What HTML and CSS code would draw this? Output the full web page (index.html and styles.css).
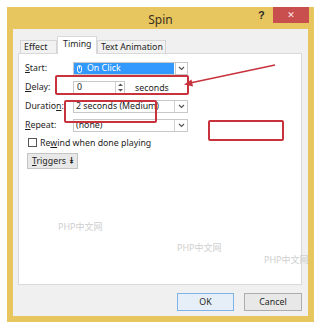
FILE: index.html
```html
<!DOCTYPE html>
<html>
<head>
<meta charset="utf-8">
<link rel="stylesheet" href="styles.css">
</head>
<body>
<div class="window">
  <div class="titlebar">
    <span class="title">Spin</span>
    <span class="help">?</span>
    <span class="close">✕</span>
  </div>
  <div class="body">
    <div class="tabs">
      <span class="tab t1">Effect</span>
      <span class="tab active">Timing</span>
      <span class="tab t3">Text Animation</span>
    </div>
    <div class="panel">
      <div class="form">
        <span class="label"><u>S</u>tart:</span>
        <div class="combo selected">
          <span class="field"><svg class="mouse" width="5" height="8" viewBox="0 0 5 8"><rect x="0.5" y="0.5" width="4" height="7" rx="2" fill="none" stroke="#fff"/><line x1="2.5" y1="1" x2="2.5" y2="3.5" stroke="#fff"/></svg><span>On Click</span></span>
          <span class="drop"><svg width="7" height="5" viewBox="0 0 7 5"><path d="M1 1 L3.5 3.5 L6 1" fill="none" stroke="#555" stroke-width="1.2"/></svg></span>
        </div>
        <span class="label"><u>D</u>elay:</span>
        <div class="delay-row">
          <div class="spin">
            <span class="value">0</span>
            <span class="arrows"><svg width="7" height="11" viewBox="0 0 7 11"><path d="M1 4 L3.5 1.5 L6 4 Z M1 7 L3.5 9.5 L6 7 Z" fill="#555"/></svg></span>
          </div>
          <span class="unit">seconds</span>
        </div>
        <span class="label">Duratio<u>n</u>:</span>
        <div class="combo">
          <span class="field"><span>2 seconds (Medium)</span></span>
          <span class="drop"><svg width="7" height="5" viewBox="0 0 7 5"><path d="M1 1 L3.5 3.5 L6 1" fill="none" stroke="#555" stroke-width="1.2"/></svg></span>
        </div>
        <span class="label"><u>R</u>epeat:</span>
        <div class="combo">
          <span class="field"><span>(none)</span></span>
          <span class="drop"><svg width="7" height="5" viewBox="0 0 7 5"><path d="M1 1 L3.5 3.5 L6 1" fill="none" stroke="#555" stroke-width="1.2"/></svg></span>
        </div>
      </div>
      <div class="check"><span class="box"></span><span class="ctext">Re<u>w</u>ind when done playing</span></div>
      <div class="triggers"><span class="ttext"><u>T</u>riggers</span><span class="dd">&#x2BEF;</span></div>
    </div>
    <div class="footer">
      <span class="btn ok">OK</span>
      <span class="btn">Cancel</span>
    </div>
  </div>
</div>

<span class="wm wm1">PHP中文网</span>
<span class="wm wm2">PHP中文网</span>
<span class="wm wm3">PHP中文网</span>

<div class="mark mark-delay"></div>
<div class="mark mark-duration"></div>
<div class="mark mark-empty"></div>
<svg class="arrow" width="321" height="330" viewBox="0 0 321 330">
  <line x1="275" y1="65" x2="190" y2="83" stroke="#c8323c" stroke-width="1.6"/>
  <path d="M184 84.5 L191.5 79.5 L193 86.5 Z" fill="#c8323c"/>
</svg>
</body>
</html>
```
FILE: styles.css
```css
* { box-sizing: border-box; }
html, body { margin: 0; padding: 0; background: #fff; }
body {
  width: 321px;
  height: 330px;
  position: relative;
  overflow: hidden;
  font-family: "Noto Sans", "Noto Sans CJK SC", sans-serif;
  font-size: 8.8px;
  color: #1e1e1e;
}
u { text-decoration: underline; text-underline-offset: 1px; }

.window {
  margin: 7px 0 0 7px;
  width: 307px;
  height: 315px;
  background: #e7c65f;
  display: flex;
  flex-direction: column;
}
.titlebar {
  height: 22px;
  position: relative;
}
.title {
  position: absolute;
  left: 0; right: 0;
  top: 4px;
  text-align: center;
  font-size: 12px;
  color: #3a3020;
}
.help {
  position: absolute;
  left: 251px;
  top: 2px;
  font-size: 11px;
  font-weight: bold;
  color: #2a2a2a;
  font-family: "Liberation Sans", sans-serif;
}
.close {
  position: absolute;
  left: 266px;
  top: 0;
  width: 36px;
  height: 16px;
  background: #c94f4f;
  color: #fbe8e8;
  font-size: 9px;
  font-weight: bold;
  display: flex;
  align-items: center;
  justify-content: center;
  font-family: "DejaVu Sans", sans-serif;
}
.body {
  margin: 0 6px 6px 6px;
  flex: 1;
  background: #f0f0f0;
  display: flex;
  flex-direction: column;
  padding: 7px 6px 0 5px;
}
.tabs {
  display: flex;
  align-items: flex-end;
  padding-left: 2px;
  height: 17px;
  position: relative;
  z-index: 1;
}
.tab {
  height: 13px;
  border: 1px solid #d6d6d6;
  border-bottom: none;
  background: #f2f2f2;
  padding: 0 3px;
  line-height: 12px;
  white-space: nowrap;
}
.tab.t1 { width: 37px; }
.tab.active {
  height: 18px;
  background: #fff;
  margin-bottom: -1px;
  line-height: 14px;
  padding: 0 5px;
  width: 40px;
  border-color: #d9d9d9;
}
.tab.t3 { width: 69px; }

.panel {
  height: 232px;
  background: #fff;
  border: 1px solid #d9d9d9;
  padding: 8px 0 0 6px;
  display: flex;
  flex-direction: column;
  align-items: flex-start;
}
.form {
  display: grid;
  grid-template-columns: 48px 115px;
  grid-auto-rows: 13px;
  row-gap: 6px;
  align-items: center;
}
.label { line-height: 13px; white-space: nowrap; }
.combo {
  display: flex;
  height: 13px;
  border: 1px solid #c8c8c8;
  background: #fff;
}
.field {
  flex: 1;
  overflow: hidden;
  white-space: nowrap;
  line-height: 11px;
  padding-left: 2px;
  display: flex;
  align-items: center;
  gap: 4px;
}
.combo.selected .field {
  background: #3399ff;
  color: #fff;
  margin: 0 1px 0 0;
  padding-left: 3px;
  gap: 5px;
}
.drop {
  width: 13px;
  border-left: 1px solid #d0d0d0;
  display: flex;
  align-items: center;
  justify-content: center;
  background: #fff;
}
.combo.selected .drop { border: 1px solid #c8c8c8; margin: -1px -1px -1px 0; }
.delay-row {
  display: flex;
  align-items: center;
  gap: 10px;
}
.spin {
  width: 52px;
  height: 13px;
  border: 1px solid #c8c8c8;
  display: flex;
}
.spin .value { flex: 1; padding-left: 3px; line-height: 11px; }
.spin .arrows {
  width: 9px;
  border-left: 1px solid #d0d0d0;
  display: flex;
  align-items: center;
  justify-content: center;
}
.check {
  margin-top: 5px;
  display: flex;
  align-items: center;
  gap: 3px;
  height: 11px;
  margin-left: 3px;
}
.check .box {
  width: 9px;
  height: 9px;
  border: 1px solid #555;
  background: #fff;
}
.ctext { white-space: nowrap; }
.triggers {
  margin-top: 5px;
  margin-left: 2px;
  width: 51px;
  height: 16px;
  border: 1px solid #c4c4c4;
  background: #e8e8e8;
  display: flex;
  align-items: center;
  padding-left: 4px;
  gap: 3px;
}
.triggers .dd { font-family: "DejaVu Sans", sans-serif; font-size: 9px; }
.footer {
  display: flex;
  justify-content: flex-end;
  gap: 10px;
  padding-top: 8px;
}
.btn {
  width: 58px;
  height: 18px;
  border: 1px solid #adadad;
  background: #e8e8e8;
  display: flex;
  align-items: center;
  justify-content: center;
}
.btn.ok { width: 57px; border-color: #7eb4ea; background: #e6eef7; }

.wm {
  position: absolute;
  color: #cfcfcf;
  font-size: 9px;
}
.wm1 { left: 58px; top: 220px; }
.wm2 { left: 177px; top: 241px; }
.wm3 { left: 264px; top: 253px; }

.mark {
  position: absolute;
  border: 2px solid #c8323c;
  border-radius: 2px;
}
.mark-delay { left: 55px; top: 75px; width: 134px; height: 20px; }
.mark-duration { left: 64px; top: 100px; width: 93px; height: 23px; }
.mark-empty { left: 208px; top: 120px; width: 76px; height: 21px; }
.arrow { position: absolute; left: 0; top: 0; }
```
